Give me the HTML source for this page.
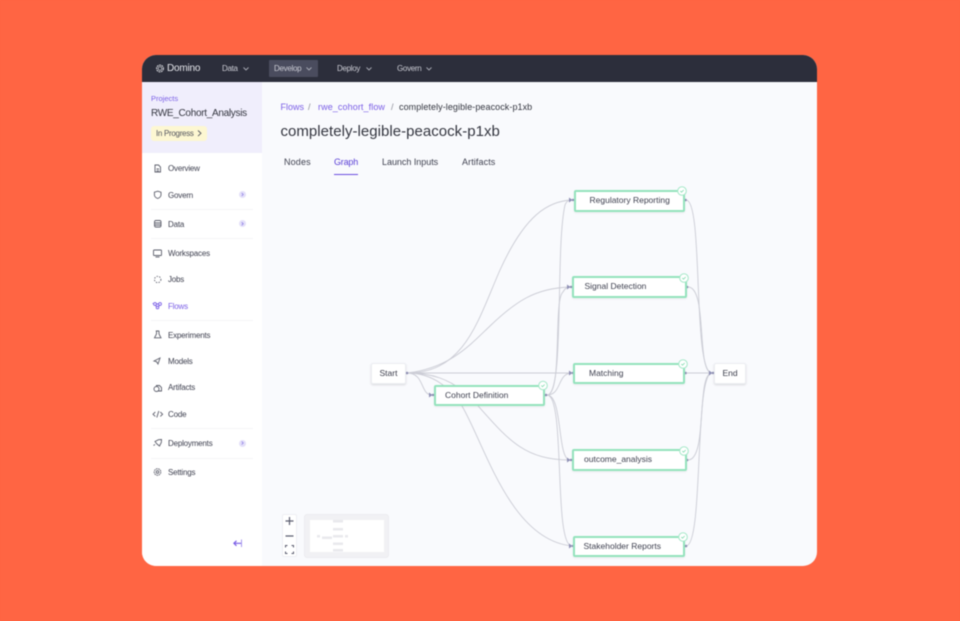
<!DOCTYPE html>
<html><head><meta charset="utf-8">
<style>
html,body{margin:0;padding:0;width:960px;height:621px;overflow:hidden;background:#ff6543;font-family:"Liberation Sans",sans-serif}
#w{position:absolute;left:0;top:0;width:960px;height:621px;background:#ff6543;filter:blur(.45px)}
.a{position:absolute;white-space:nowrap}
#card{position:absolute;left:142px;top:55px;width:675px;height:511px;border-radius:14px;overflow:hidden;background:#f9fafd}
#top{position:absolute;left:142px;top:55px;width:675px;height:27px;background:#2c2e3b;border-radius:14px 14px 0 0}
#side{position:absolute;left:142px;top:82px;width:120px;height:484px;background:#fff;border-bottom-left-radius:14px}
#phead{position:absolute;left:142px;top:82px;width:120px;height:71px;background:#f0eefc}
.nav{color:#c9cad2;font-size:8px;letter-spacing:-.3px}
.it{color:#3f4150;font-size:8px;letter-spacing:-.2px;left:168px}
.sep{position:absolute;left:151px;width:102px;height:1px;background:#f5f5f7}
.bd{position:absolute;left:239px;width:7px;height:7px;border-radius:50%;background:#e4e0f9}
.node{position:absolute;box-sizing:border-box;background:#fff;border:2px solid #93e3bc;border-radius:2px;height:21.5px;color:#3f4150;font-size:8.5px;letter-spacing:0;line-height:17.5px;white-space:nowrap;box-shadow:0 1px 2px #0001}
.pl{position:absolute;box-sizing:border-box;background:#fff;border:1px solid #eceef2;border-radius:2px;height:21px;color:#3a3c4a;font-size:8.5px;line-height:19px;text-align:center;box-shadow:0 1px 2px #0002}
svg{position:absolute;left:0;top:0}
</style></head><body><div id="w">
<div id="card"></div>
<div id="top"></div>
<div id="side"></div>
<div id="phead"></div>

<svg width="960" height="621" fill="none">
 <!-- sidebar icons -->
 <g stroke="#5d5f6c" stroke-width=".9">
  <path d="M155 165h3.500l2 2v5h-5.500z"/><path d="M156.500 169h2.500M156.500 170.800h2.500"/>
  <path d="M157.700 191.200l3.300 1v2.500c0 1.900-1.500 3.100-3.300 3.800-1.800-.7-3.300-1.900-3.300-3.800v-2.500z"/>
  <rect x="154.500" y="220.500" width="6.500" height="6.500" rx="1.500"/><path d="M154.500 223h6.500M154.500 225h6.500"/>
  <rect x="153.500" y="250" width="8" height="5.500" rx=".8"/><path d="M155.500 257h4"/>
  <circle cx="157.700" cy="279.500" r="3.200" stroke-dasharray="1.400 1.300"/>
 </g>
 <g stroke="#7a5ee6" stroke-width=".9"><circle cx="155" cy="304" r="1.400"/><circle cx="160" cy="304" r="1.400"/><circle cx="157.500" cy="307.500" r="1.300"/><path d="M153 303.500h-.5M156.500 304h2M155.500 305.500l1.200 1M159.500 305.500l-1.200 1"/></g>
 <g stroke="#5d5f6c" stroke-width=".9">
  <path d="M155.800 331h3.400M156.500 331v3l-2 3.800h6.500l-2-3.800v-3"/>
  <path d="M154 361l6-3-2 6-1.500-2.300z"/>
  <path d="M156 385.500h3.500l2 2v3.500h-4"/><circle cx="156.500" cy="389" r="2.500"/>
  <path d="M155.300 412l-2.300 2.200 2.300 2.200M160.300 412l2.300 2.200-2.300 2.200M158.800 411l-2 6.500"/>
  <path d="M155 441.500l3.500-1.800 3-.2-.2 3-1.800 3.500-2.500-2zM155 444.500l-1.500 1"/>
  <circle cx="157.500" cy="472" r="3.300" stroke-dasharray="1.700 .6"/><circle cx="157.500" cy="472" r="1.300"/>
 </g>
 <path d="M242 543.300h-8M236.500 540.800l-2.600 2.500 2.600 2.500" stroke="#7a5ee6" stroke-width="1.200"/><path d="M241.500 539.500v7.500" stroke="#a899ee" stroke-width="1"/>

 <!-- edges -->
 <g stroke="#cbccd5" stroke-width=".9">
  <path d="M407 373C465 373 478 320 500 270C525 215 548 201 572 200"/>
  <path d="M407 373C450 368 470 345 490 326C515 302 535 288 570 287"/>
  <path d="M407 373H572"/>
  <path d="M407 373C425 373 420 395 432 395"/>
  <path d="M407 373C430 373 450 378 470 397C505 435 520 460 570 460"/>
  <path d="M407 373C425 373 445 380 462 406C485 445 510 540 572 546"/>
  <path d="M547 395C565 395 555 250 565 205C567 200 570 200 572 200"/>
  <path d="M547 395C563 395 553 300 563 292C565 288 568 287 570 287"/>
  <path d="M547 395C562 395 557 373 572 373"/>
  <path d="M547 395C563 395 557 460 570 460"/>
  <path d="M547 395C566 395 553 546 572 546"/>
  <path d="M686 200C704 200 692 373 712 373"/>
  <path d="M688 287C708 287 696 373 712 373"/>
  <path d="M686 373H712"/>
  <path d="M688 460C708 460 696 373 712 373"/>
  <path d="M686 546C704 546 694 373 712 373"/>
 </g>
 <g fill="#8f90b5">
  <circle cx="407" cy="373" r="1.300"/><circle cx="546" cy="395" r="1.300"/><circle cx="685.500" cy="200" r="1.300"/><circle cx="687" cy="287" r="1.300"/><circle cx="685.500" cy="373" r="1.300"/><circle cx="687" cy="460" r="1.300"/><circle cx="686" cy="546" r="1.300"/>
  <path d="M569 197.500l3.500 2.500-3.500 2.500zM567 284.500l3.500 2.500-3.500 2.500zM569 370.500l3.500 2.500-3.500 2.500zM567 457.500l3.500 2.500-3.500 2.500zM569 543.500l3.500 2.500-3.500 2.500zM429 392.500l3.500 2.500-3.500 2.500zM709 370.500l3.500 2.500-3.500 2.500z"/>
  <circle cx="573" cy="200" r="1.200"/><circle cx="571" cy="287" r="1.200"/><circle cx="573" cy="373" r="1.200"/><circle cx="571" cy="460" r="1.200"/><circle cx="573" cy="546" r="1.200"/><circle cx="433" cy="395" r="1.200"/><circle cx="713" cy="373" r="1.200"/>
 </g>
</svg>

<!-- top nav -->
<svg width="960" height="621" fill="none">
 <g stroke="#e4e5ea"><circle cx="160" cy="68.500" r="3.400" stroke-width="1" stroke-dasharray="1.800 .7"/><circle cx="160" cy="68.500" r="1.800" stroke-width=".7"/></g>
</svg>
<div class="a" style="left:167px;top:63px;font-size:10px;letter-spacing:-.2px;color:#e6e7ec">Domino</div>
<div class="a nav" style="left:222px;top:64px">Data</div>
<div class="a" style="left:269px;top:60px;width:49px;height:17px;background:#4a4c5e;border-radius:1px"></div>
<div class="a nav" style="left:274px;top:64px">Develop</div>
<div class="a nav" style="left:337px;top:64px">Deploy</div>
<div class="a nav" style="left:397px;top:64px">Govern</div>
<svg width="960" height="621" fill="none">
 <path d="M243.500 67.500l2.500 2.500 2.500-2.500M306.500 67.500l2.500 2.500 2.500-2.500M366.500 67.500l2.500 2.500 2.500-2.500M426.500 67.500l2.500 2.500 2.500-2.500" stroke="#a9abb5" stroke-width=".9"/>
</svg>

<!-- project -->
<div class="a" style="left:151px;top:93.500px;font-size:7.500px;color:#7a5ee6;letter-spacing:0">Projects</div>
<div class="a" style="left:151px;top:108px;font-size:10px;color:#33353f;letter-spacing:-.3px">RWE_Cohort_Analysis</div>
<div class="a" style="left:151px;top:126px;width:56px;height:15px;background:#fdf7d2;border-radius:3px"></div>
<div class="a" style="left:156px;top:128.500px;font-size:8px;color:#55565f;letter-spacing:-.3px">In Progress</div>
<svg width="960" height="621" fill="none">
 <path d="M198 130.500l3 2.800-3 2.800" stroke="#55565f" stroke-width=".9"/>
</svg>

<!-- sidebar -->
<div class="a it" style="top:163.500px">Overview</div>
<div class="a it" style="top:190.500px">Govern</div>
<div class="bd" style="top:191px"></div>
<div class="sep" style="top:209px"></div>
<div class="a it" style="top:219.500px">Data</div>
<div class="bd" style="top:220px"></div>
<div class="sep" style="top:238px"></div>
<div class="a it" style="top:248.500px">Workspaces</div>
<div class="a it" style="top:275px">Jobs</div>
<div class="a it" style="top:301.500px;color:#7a5ee6">Flows</div>
<div class="sep" style="top:320px"></div>
<div class="a it" style="top:330.500px">Experiments</div>
<div class="a it" style="top:356.500px">Models</div>
<div class="a it" style="top:383px">Artifacts</div>
<div class="a it" style="top:409.500px">Code</div>
<div class="sep" style="top:428px"></div>
<div class="a it" style="top:438.500px">Deployments</div>
<div class="bd" style="top:440px"></div>
<div class="sep" style="top:458px"></div>
<div class="a it" style="top:467.500px">Settings</div>
<svg width="960" height="621" fill="none">
 <path d="M241.700 193l1.500 1.500-1.500 1.500M241.700 222.300l1.500 1.500-1.500 1.500M241.700 441.500l1.500 1.500-1.500 1.500" stroke="#8f80e6" stroke-width=".8"/>
</svg>

<!-- header -->
<div class="a" style="left:280.500px;top:102px;font-size:9px;letter-spacing:0;color:#7a5ee6">Flows</div>
<div class="a" style="left:308px;top:102px;font-size:9px;color:#8d8e99">/</div>
<div class="a" style="left:318px;top:102px;font-size:9px;letter-spacing:.1px;color:#7a5ee6">rwe_cohort_flow</div>
<div class="a" style="left:391px;top:102px;font-size:9px;color:#8d8e99">/</div>
<div class="a" style="left:399px;top:102px;font-size:9px;letter-spacing:.07px;color:#33353f">completely-legible-peacock-p1xb</div>
<div class="a" style="left:280.500px;top:123px;font-size:15px;letter-spacing:.03px;color:#33353f">completely-legible-peacock-p1xb</div>
<div class="a" style="left:284px;top:157px;font-size:9px;letter-spacing:.15px;color:#3f4150">Nodes</div>
<div class="a" style="left:334px;top:157px;font-size:9px;letter-spacing:-.2px;color:#5a3fd6">Graph</div>
<div class="a" style="left:334px;top:173.500px;width:24px;height:1.500px;background:#6b4fe0"></div>
<div class="a" style="left:382px;top:157px;font-size:9px;letter-spacing:-.03px;color:#3f4150">Launch Inputs</div>
<div class="a" style="left:462px;top:157px;font-size:9px;letter-spacing:.1px;color:#3f4150">Artifacts</div>

<!-- nodes -->
<div class="pl" style="left:371px;top:363px;width:35px">Start</div>
<div class="pl" style="left:714px;top:363px;width:32px">End</div>
<div class="node" style="left:574px;top:190px;width:111px;padding-left:13.500px">Regulatory Reporting</div>
<div class="node" style="left:572px;top:276px;width:115px;padding-left:10.500px">Signal Detection</div>
<div class="node" style="left:573px;top:362.500px;width:112px;padding-left:14px">Matching</div>
<div class="node" style="left:572px;top:449px;width:115px;padding-left:10px">outcome_analysis</div>
<div class="node" style="left:573px;top:535.500px;width:112px;padding-left:8.500px">Stakeholder Reports</div>
<div class="node" style="left:434px;top:384.500px;width:111px;padding-left:9px">Cohort Definition</div>
<svg width="960" height="621" fill="none">
 <g fill="#fff" stroke="#a5e8c8" stroke-width="1">
  <circle cx="682" cy="191" r="4.300"/><circle cx="684" cy="278" r="4.300"/><circle cx="683" cy="364" r="4.300"/><circle cx="684" cy="451" r="4.300"/><circle cx="683" cy="537" r="4.300"/><circle cx="543" cy="385.500" r="4.300"/>
 </g>
 <g stroke="#7fdcae" stroke-width=".8">
  <path d="M680.300 191l1.200 1.200 2.200-2.200M682.300 278l1.200 1.200 2.200-2.200M681.300 364l1.200 1.200 2.200-2.200M682.300 451l1.200 1.200 2.200-2.200M681.300 537l1.200 1.200 2.200-2.200M541.300 385.500l1.200 1.200 2.200-2.200"/>
 </g>
</svg>

<!-- controls -->
<div class="a" style="left:282px;top:514px;width:15px;height:43px;background:#fff;border:1px solid #eeeff3;box-sizing:border-box;border-radius:2px"></div>
<div class="a" style="left:304px;top:514px;width:85px;height:44px;background:#f1f1f4;border:1px solid #ececf0;box-sizing:border-box;border-radius:3px"></div>
<div class="a" style="left:310px;top:520px;width:74px;height:32px;background:#fff"></div>
<svg width="960" height="621" fill="none">
 <path d="M285.500 521h8M289.500 517v8M285.500 536h8" stroke="#5c5e70" stroke-width="1.200"/>
 <path d="M285.500 547.500v-2h2M291.500 545.500h2v2M293.500 551.500v2h-2M287.500 553.500h-2v-2" stroke="#5c5e70" stroke-width="1"/>
 <g fill="#e9e9ed">
  <rect x="333" y="520" width="10" height="2.500"/><rect x="333" y="528" width="10" height="2.500"/><rect x="333" y="535" width="10" height="2.500"/><rect x="333" y="542.500" width="10" height="2.500"/><rect x="333" y="549" width="10" height="2.500"/>
  <rect x="322" y="536.500" width="10" height="2.500"/><rect x="317" y="535" width="3" height="2.500"/><rect x="345" y="535" width="3" height="2.500"/>
 </g>
</svg>
</div></body></html>
